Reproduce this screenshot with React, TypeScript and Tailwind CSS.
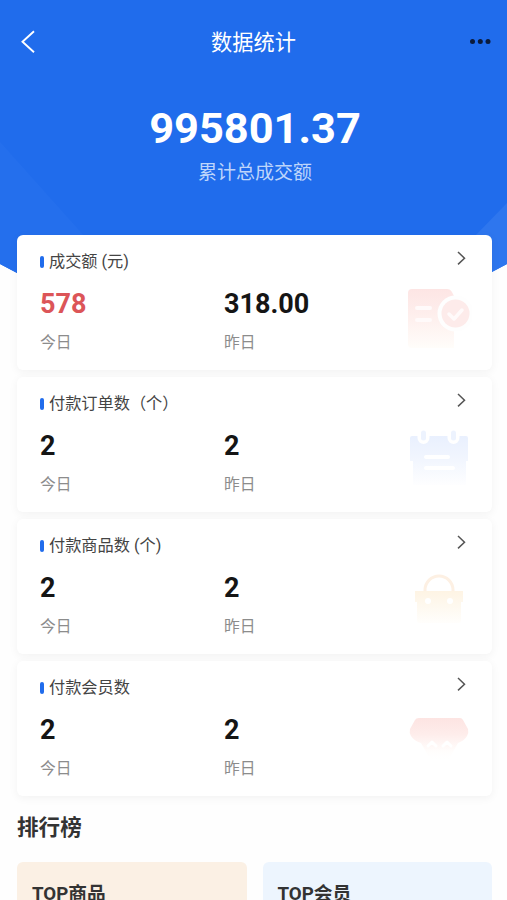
import React from "react";

const OrderArt = () => (
	<svg width="66" height="64" viewBox="0 0 66 64" fill="none">
		<defs>
			<linearGradient id="order" x1="0" y1="0" x2="0" y2="1">
				<stop offset="0" stopColor="#fde5e4" />
				<stop offset="0.5" stopColor="#fef0ee" />
				<stop offset="1" stopColor="#fffdfa" />
			</linearGradient>
		</defs>
		<path d="M6 1h35c4 0 5 3 7 7v52H6a4 4 0 0 1-4-4V5a4 4 0 0 1 4-4Z" fill="url(#order)" />
		<path d="M11 20h13M11 32h13" stroke="#fffafa" strokeWidth="4" strokeLinecap="round" />
		<circle cx="49.5" cy="25.5" r="18" fill="#fefefe" />
		<circle cx="49.5" cy="25.5" r="14" fill="#fdebea" />
		<path d="m43 26 5 5 8-9" stroke="#fffafa" strokeWidth="3.5" strokeLinecap="round" strokeLinejoin="round" />
	</svg>
);

const CalendarArt = () => (
	<svg width="66" height="64" viewBox="0 0 66 64" fill="none">
		<defs>
			<linearGradient id="calendar" x1="0" y1="0" x2="0" y2="1">
				<stop offset="0" stopColor="#e9f0fe" />
				<stop offset="0.5" stopColor="#f2f6fe" />
				<stop offset="1" stopColor="#fefeff" />
			</linearGradient>
		</defs>
		<path d="M6 6h54a2 2 0 0 1 2 2v23h-2v24H7V31H4V8a2 2 0 0 1 2-2Z" fill="url(#calendar)" />
		<path d="M17.5 2v6M47.5 2v6" stroke="#fff" strokeWidth="12" strokeLinecap="round" />
		<path d="M17.5 3v5M47.5 3v5" stroke="#edf3fe" strokeWidth="5" strokeLinecap="round" />
		<path d="M20 27h22M20 38h27" stroke="#fff" strokeWidth="4" strokeLinecap="round" />
	</svg>
);

const BagArt = () => (
	<svg width="66" height="64" viewBox="0 0 66 64" fill="none">
		<defs>
			<linearGradient id="bag" x1="0" y1="0" x2="0" y2="1">
				<stop offset="0" stopColor="#fef4e4" />
				<stop offset="0.5" stopColor="#fef9f0" />
				<stop offset="1" stopColor="#fffefc" />
			</linearGradient>
		</defs>
		<path d="M19 20v-2a14 14 0 0 1 28 0v2" stroke="#fdf0e3" strokeWidth="3" />
		<path d="M9 19h48v11h-2v19a2 2 0 0 1-2 2H13a2 2 0 0 1-2-2V30H9Z" fill="url(#bag)" />
		<circle cx="22" cy="29" r="3" fill="#fff" />
		<circle cx="44" cy="29" r="3" fill="#fff" />
	</svg>
);

const MemberArt = () => (
	<svg width="66" height="64" viewBox="0 0 66 64" fill="none">
		<defs>
			<linearGradient id="member" x1="0" y1="0" x2="0" y2="1">
				<stop offset="0" stopColor="#fde4e2" />
				<stop offset="0.4" stopColor="#feedeb" />
				<stop offset="0.8" stopColor="#fffdfc" />
				<stop offset="1" stopColor="#ffffff" />
			</linearGradient>
		</defs>
		<path d="M13 4h41q2 0 3 2l5 9q1 4-1 7-3 5-9 7l-9 16H24l-9-16q-7-2-10-7-2-3-1-7l5-9q1-2 4-2Z" fill="url(#member)" />
		<path d="m22 32 4-4 4 4M37 32l4-4 4 4" stroke="#fff" strokeWidth="3" strokeLinecap="round" strokeLinejoin="round" />
	</svg>
);

const stats = [
	{ title: "成交额 (元)", today: "578", yesterday: "318.00", highlight: true, art: <OrderArt /> },
	{ title: "付款订单数（个）", today: "2", yesterday: "2", highlight: false, art: <CalendarArt /> },
	{ title: "付款商品数 (个)", today: "2", yesterday: "2", highlight: false, art: <BagArt /> },
	{ title: "付款会员数", today: "2", yesterday: "2", highlight: false, art: <MemberArt /> },
];

const StatCard = ({ item }) => {
	const { title, today, yesterday, highlight, art } = item;

	return (
		<section className="h-[135px] rounded-md bg-white pl-[23px] pr-[23px] pt-[15px] shadow-[0_2px_10px_rgba(0,0,0,0.05)]">
			<div className="flex h-6 items-center justify-between">
				<div className="flex items-center gap-[5px]">
					<span className="-mt-px h-3 w-1 rounded-sm bg-[#206cec]" />
					<h2 className="text-[16.2px] leading-6 text-[#444]">{title}</h2>
				</div>
				<svg width="16" height="16" viewBox="0 0 16 16" fill="none" className="-mt-2">
					<path d="m5 2 6.5 6.2L5 14.4" stroke="#555" strokeWidth="1.5" />
				</svg>
			</div>
			<div className="flex">
				<div className="w-[184px]">
					<div className={`mt-[14px] text-[27px] leading-8 font-bold ${highlight ? "text-[#dc5558]" : "text-[#151515]"}`}>
						{today}
					</div>
					<div className="mt-[11px] text-[15.8px] leading-6 text-[#8c8c8c]">今日</div>
				</div>
				<div className="flex-1">
					<div className="mt-[14px] text-[27px] leading-8 font-bold text-[#151515]">{yesterday}</div>
					<div className="mt-[11px] text-[15.8px] leading-6 text-[#8c8c8c]">昨日</div>
				</div>
				<div className="mt-[14px] -mr-[3px] w-[66px]">{art}</div>
			</div>
		</section>
	);
};

const App = () => {
	return (
		<div className="relative h-[900px] w-full overflow-hidden bg-[#fefefe] font-[Roboto,'Noto_Sans_CJK_SC',sans-serif]">
			<svg width="507" height="290" viewBox="0 0 507 290" className="absolute top-0 left-0">
				<defs>
					<linearGradient id="facet" x1="0" y1="0" x2="1" y2="1">
						<stop offset="0" stopColor="#246fed" />
						<stop offset="1" stopColor="#246fed" />
					</linearGradient>
				</defs>
				<path d="M0 0h507v264l-34 18H34L0 264Z" fill="#206cec" />
				<path d="M0 142 102 256H34v26L0 264Z" fill="url(#facet)" />
				<path d="M507 203v61l-34 18v-44Z" fill="#2e76ee" />
			</svg>

			<div className="relative">
				<header className="flex h-[84px] items-center justify-between px-4 text-white">
					<svg width="24" height="24" viewBox="0 0 24 24" fill="none">
						<path d="M18 1.2 6.5 11.7 18 22.2" stroke="white" strokeWidth="1.9" />
					</svg>
					<h1 className="pt-0.5 text-[21.2px] leading-8">数据统计</h1>
					<svg width="24" height="24" viewBox="0 0 24 24" fill="#0b1b3c">
						<circle cx="5.5" cy="11.5" r="2.5" />
						<circle cx="13.3" cy="11.5" r="2.5" />
						<circle cx="21" cy="11.5" r="2.5" />
					</svg>
				</header>

				<div className="flex h-[151px] flex-col items-center pt-5 pl-[3px]">
					<div className="text-[43.4px] leading-[50px] font-bold text-white">995801.37</div>
					<div className="mt-[5px] text-[19px] leading-7 text-[#bdd5fb]">累计总成交额</div>
				</div>

				<main className="px-[17px] pr-[15px]">
					<div className="flex flex-col gap-[7px]">
						{stats.map((item) => (
							<StatCard key={item.title} item={item} />
						))}
					</div>
					<h2 className="mt-4 text-[21.6px] leading-8 font-bold text-[#333]">排行榜</h2>
					<div className="mt-[18px] grid grid-cols-2 gap-4">
						<div className="h-20 rounded-md bg-[#fbf0e4] px-[15px] pt-[18px] text-[18.7px] leading-7 font-bold text-[#333]">
							TOP商品
						</div>
						<div className="h-20 rounded-md bg-[#edf5fe] px-[15px] pt-[18px] text-[18.7px] leading-7 font-bold text-[#333]">
							TOP会员
						</div>
					</div>
				</main>
			</div>
		</div>
	);
};

export default App;
